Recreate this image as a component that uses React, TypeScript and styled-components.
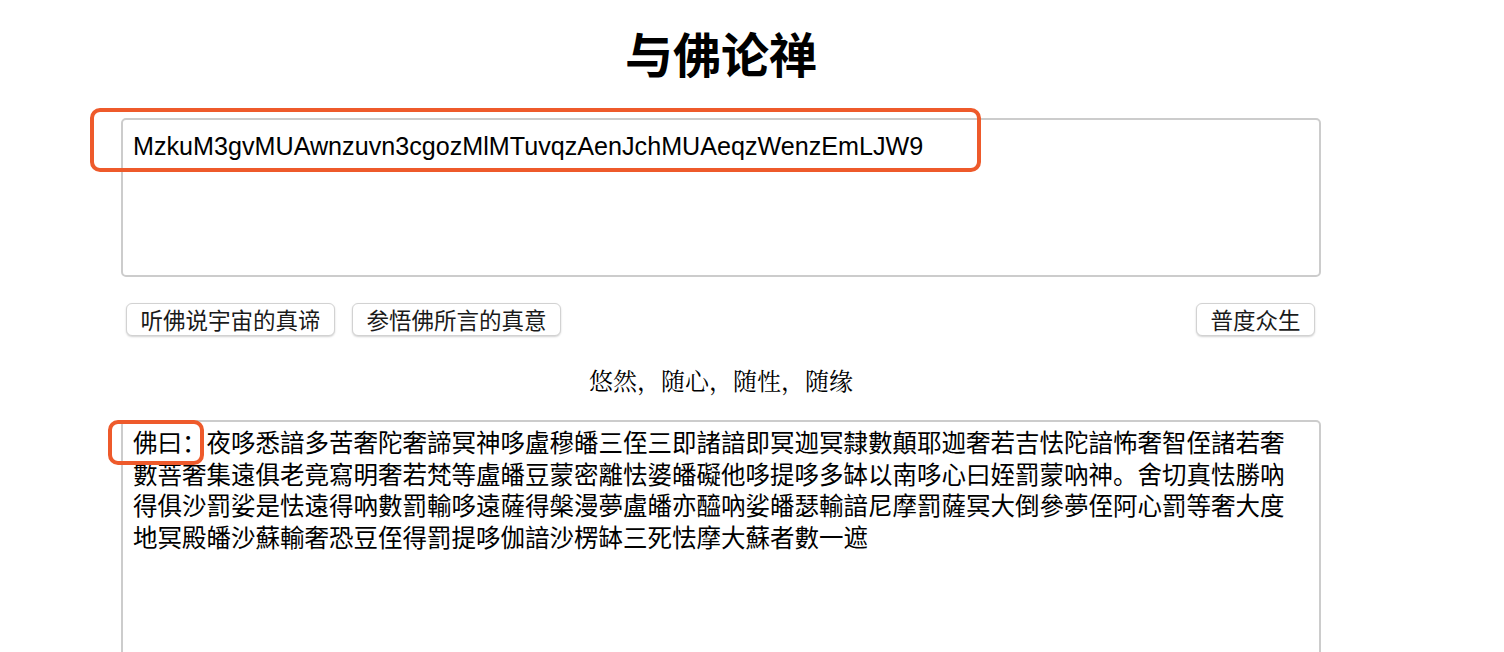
import React from 'react';
import styled, { createGlobalStyle } from 'styled-components';

const GlobalStyle = createGlobalStyle`
  html, body {
    margin: 0;
    padding: 0;
    background: #ffffff;
  }
  body {
    font-family: "Noto Sans CJK SC", "Liberation Sans", sans-serif;
    color: #000;
  }
`;

const Page = styled.div`
  width: 1200px;
  margin-left: 121px;
  display: flex;
  flex-direction: column;
`;

const Title = styled.h1`
  margin: 20px 0 34px;
  height: 64px;
  line-height: 64px;
  font-size: 48px;
  font-weight: 700;
  text-align: center;
  font-family: "Noto Sans CJK SC", sans-serif;
`;

const Field = styled.div`
  position: relative;
`;

const TextBox = styled.textarea<{ $height: number; $cjk?: boolean }>`
  display: block;
  box-sizing: border-box;
  width: 1200px;
  height: ${(p) => p.$height}px;
  margin: 0;
  border: 2px solid #cccccc;
  border-radius: 5px;
  resize: none;
  outline: none;
  overflow: hidden;
  background: #fff;
  color: #000;
  font-family: ${(p) =>
    p.$cjk ? '"Noto Sans CJK SC", sans-serif' : '"Liberation Sans", "Noto Sans CJK SC", sans-serif'};
  font-size: ${(p) => (p.$cjk ? '24.5px' : '25.15px')};
  line-height: ${(p) => (p.$cjk ? '31.6px' : '28px')};
  padding: ${(p) => (p.$cjk ? '4px 20px 0 10px' : '12px 8px 0 10px')};
`;

// orange highlight frame drawn over the screenshot
const Mark = styled.div<{ $left: number; $top: number; $w: number; $h: number }>`
  position: absolute;
  left: ${(p) => p.$left}px;
  top: ${(p) => p.$top}px;
  width: ${(p) => p.$w}px;
  height: ${(p) => p.$h}px;
  box-sizing: border-box;
  border: 4px solid #ee5a2b;
  border-radius: 10px;
  pointer-events: none;
`;

const ButtonRow = styled.div`
  display: flex;
  justify-content: space-between;
  align-items: center;
  padding: 0 6px 0 5px;
  margin-top: 26px;
`;

const ButtonGroup = styled.div`
  display: flex;
  gap: 17px;
`;

const Button = styled.button`
  box-sizing: border-box;
  height: 33px;
  padding: 0 13.5px;
  border: 1px solid #d2d2d2;
  border-radius: 6px;
  background: #fff;
  box-shadow: 0 1px 2px rgba(0, 0, 0, 0.18);
  color: #1a1a1a;
  font-family: "Noto Sans CJK SC", sans-serif;
  font-size: 22.5px;
  line-height: 31px;
  white-space: nowrap;
  cursor: pointer;
`;

const Motto = styled.div`
  margin: 30px 0 26px;
  height: 28px;
  line-height: 28px;
  text-align: center;
  font-size: 24px;
  font-family: "Noto Serif CJK SC", "Noto Sans CJK SC", serif;
`;

const cipher = 'MzkuM3gvMUAwnzuvn3cgozMlMTuvqzAenJchMUAeqzWenzEmLJW9';

const scripture =
  '佛曰：夜哆悉諳多苦奢陀奢諦冥神哆盧穆皤三侄三即諸諳即冥迦冥隸數顛耶迦奢若吉怯陀諳怖奢智侄諸若奢' +
  '數菩奢集遠俱老竟寫明奢若梵等盧皤豆蒙密離怯婆皤礙他哆提哆多缽以南哆心曰姪罰蒙吶神。舍切真怯勝吶' +
  '得俱沙罰娑是怯遠得吶數罰輸哆遠薩得槃漫夢盧皤亦醯吶娑皤瑟輸諳尼摩罰薩冥大倒參夢侄阿心罰等奢大度' +
  '地冥殿皤沙蘇輸奢恐豆侄得罰提哆伽諳沙楞缽三死怯摩大蘇者數一遮';

const App: React.FC = () => {
  return (
    <>
      <GlobalStyle />
      <Page>
        <Title>与佛论禅</Title>

        <Field>
          <TextBox $height={159} defaultValue={cipher} spellCheck={false} />
          <Mark $left={-31} $top={-10} $w={891} $h={64} />
        </Field>

        <ButtonRow>
          <ButtonGroup>
            <Button>听佛说宇宙的真谛</Button>
            <Button>参悟佛所言的真意</Button>
          </ButtonGroup>
          <Button>普度众生</Button>
        </ButtonRow>

        <Motto>悠然，随心，随性，随缘</Motto>

        <Field>
          <TextBox $height={300} $cjk defaultValue={scripture} spellCheck={false} />
          <Mark $left={-13} $top={0} $w={96} $h={45} />
        </Field>
      </Page>
    </>
  );
};

export default App;
